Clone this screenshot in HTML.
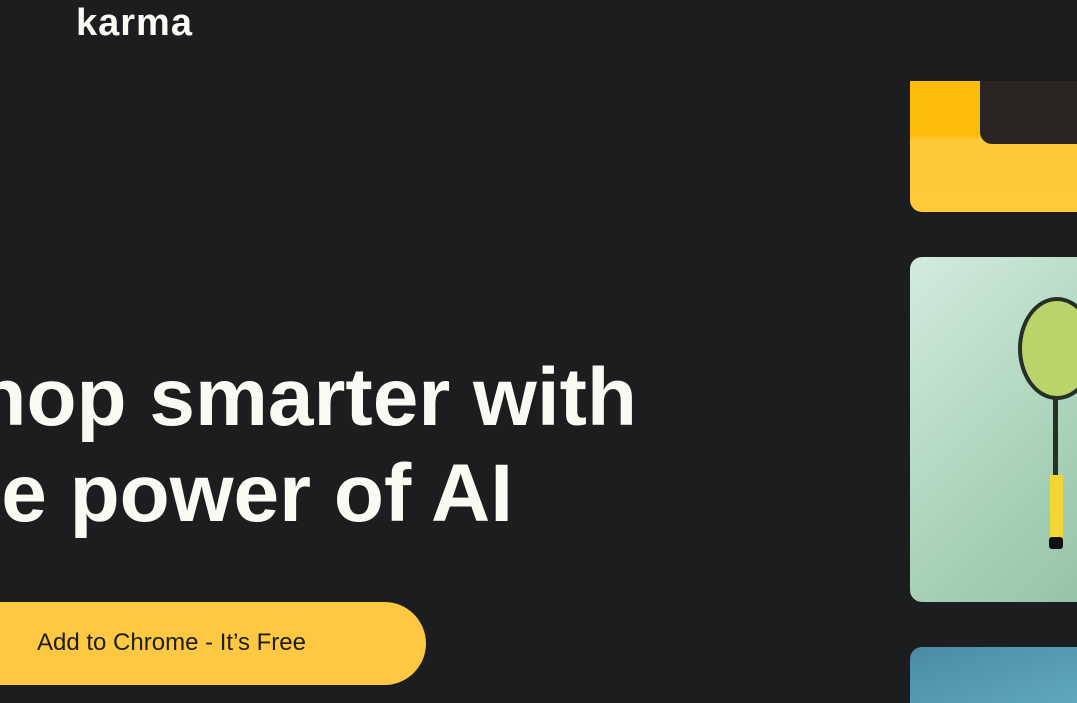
<!DOCTYPE html>
<html><head><style>
html,body{margin:0;width:1077px;height:703px;overflow:hidden;background:#1c1d1f}
#w{position:relative;width:1077px;height:703px;overflow:hidden;font-family:"Liberation Sans",sans-serif}
.logo{position:absolute;left:76px;top:3px;color:#fbf9f4;font-weight:bold;font-size:38px;letter-spacing:1px;line-height:1.1}
.h{position:absolute;color:#fbf9f4;font-weight:bold;font-size:82px;white-space:nowrap;line-height:1}
.btn{position:absolute;left:-60px;top:602px;width:486px;height:83px;border-radius:42px;background:#fec842}
.btn span{position:absolute;left:97px;top:27px;font-size:24px;color:#1c1d1f}
.card{position:absolute;left:910px;width:200px;border-radius:12px;overflow:hidden}
.clip{position:absolute;left:0;top:81px;width:1077px;height:140px;overflow:hidden}
</style></head><body><div id="w">
<div class="logo">karma</div>
<div class="h" style="right:440px;top:357px">Shop smarter with</div>
<div class="h" style="right:564px;top:453px">the power of AI</div>
<div class="btn"><span>Add to Chrome - It’s Free</span></div>
<div class="clip"><div class="card" style="top:-41px;height:172px;background:linear-gradient(#fbbd0a 0,#fbbd0a 95px,#fdc83a 100px,#ffc93a)">
<div style="position:absolute;left:70px;top:0;width:140px;height:104px;background:#2a2523;border-radius:0 0 0 12px"></div></div></div>
<div class="card" style="top:257px;height:345px;background:linear-gradient(135deg,#d3ebde,#a9d2b8 60%,#93c1a5)">
<div style="position:absolute;left:108px;top:40px;width:70px;height:95px;border:4px solid #263028;border-radius:50%;background:#b9d46a"></div>
<div style="position:absolute;left:143px;top:140px;width:5px;height:95px;background:#263028"></div>
<div style="position:absolute;left:140px;top:218px;width:13px;height:65px;background:#f3d536"></div>
<div style="position:absolute;left:139px;top:280px;width:14px;height:12px;background:#111;border-radius:3px"></div></div>
<div class="card" style="top:647px;height:80px;background:linear-gradient(160deg,#4a8ba4,#65b0c8)"></div>
</div></body></html>
